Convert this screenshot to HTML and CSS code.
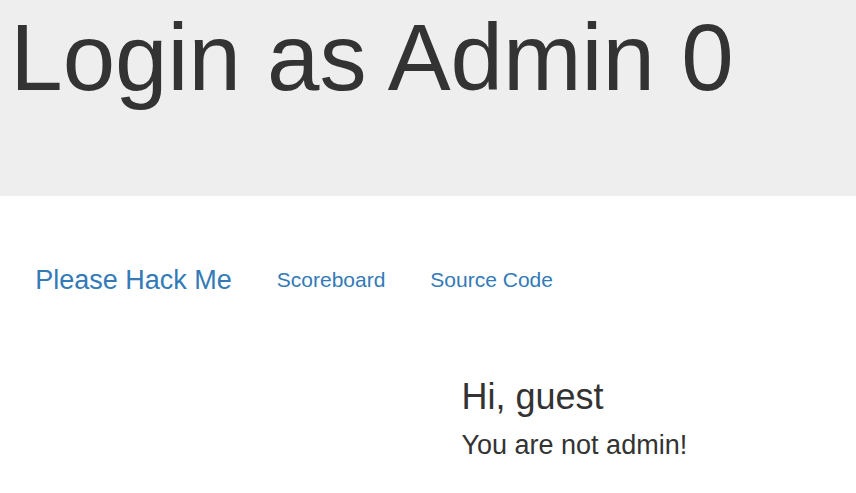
FILE: index.html
```html
<!DOCTYPE html>
<html lang="en">
<head>
<meta charset="utf-8">
<title>Login as Admin 0</title>
<link rel="stylesheet" href="styles.css">
</head>
<body>
<div class="jumbotron">
  <h1 class="title">Login as Admin 0</h1>
</div>
<nav class="navbar">
  <a class="brand" href="#">Please Hack Me</a>
  <a class="nav-link" href="#">Scoreboard</a>
  <a class="nav-link" href="#">Source Code</a>
</nav>
<main class="content">
  <div class="col-left"></div>
  <div class="col-right">
    <h3 class="greet">Hi, guest</h3>
    <h4 class="status">You are not admin!</h4>
  </div>
</main>
</body>
</html>
```
FILE: styles.css
```css
html, body {
  margin: 0;
  padding: 0;
}
body {
  font-family: "Liberation Sans", Arial, sans-serif;
  color: #333;
  background: #fff;
  width: 856px;
  height: 493px;
  overflow: hidden;
}
.jumbotron {
  background: #eee;
  height: 196px;
  box-sizing: border-box;
  padding: 5.5px 0 0 10.2px;
}
.title {
  margin: 0;
  font-size: 94.3px;
  font-weight: 400;
  line-height: 1.1;
  color: #333;
}
.navbar {
  display: flex;
  align-items: flex-start;
  padding: 68.6px 0 0 12.7px;
}
.navbar a {
  color: #337ab7;
  text-decoration: none;
  line-height: 30px;
  padding: 0 22.5px;
}
.brand {
  font-size: 27px;
}
.nav-link {
  font-size: 21px;
}
.content {
  display: grid;
  grid-template-columns: 439px 1fr;
  margin-top: 82px;
}
.col-right {
  padding-left: 22.5px;
}
.greet {
  margin: 0;
  font-size: 36px;
  font-weight: 400;
  line-height: 1.1;
}
.status {
  margin: 15px 0 0;
  font-size: 27px;
  font-weight: 400;
  line-height: 1.1;
}
```
